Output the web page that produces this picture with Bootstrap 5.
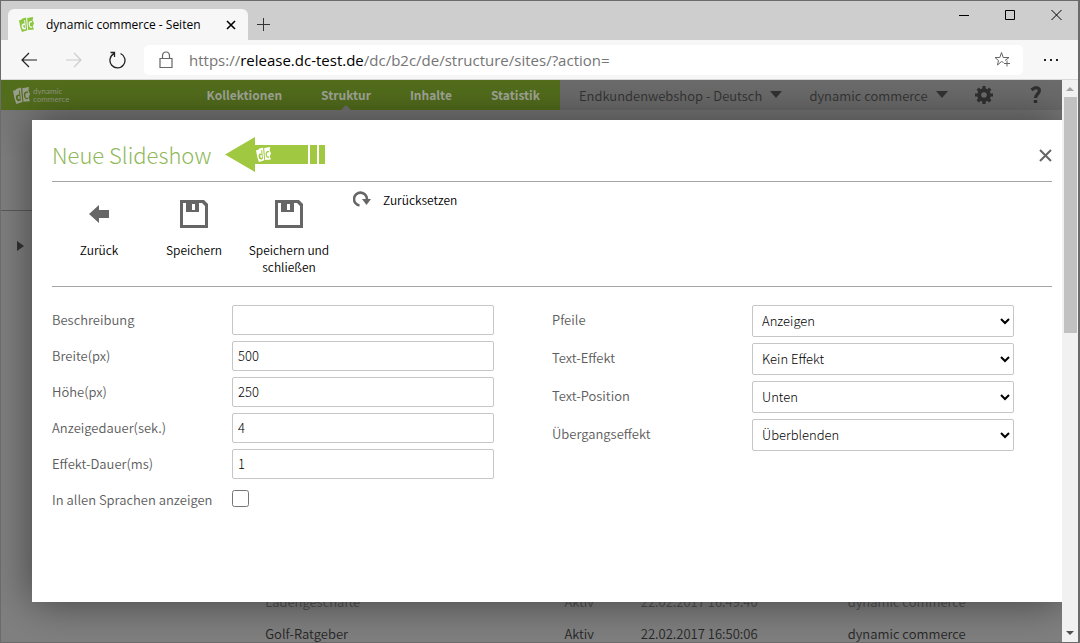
<!DOCTYPE html>
<html lang="de">
<head>
<meta charset="utf-8">
<meta name="viewport" content="width=device-width, initial-scale=1">
<title>dynamic commerce - Seiten</title>
<link href="https://cdn.jsdelivr.net/npm/bootstrap@5.3.0/dist/css/bootstrap.min.css" rel="stylesheet">
<style>
  body { font-family: "Noto Sans CJK SC", sans-serif; font-size: 13px; font-weight: 350; line-height: 17px; color: #5c5c5c; background: #6b6b6b; }
  svg { display: block; flex: none; }
  button { background: none; border: 0; padding: 0; color: inherit; font-weight: inherit; }
  .browser { border: 1px solid #6b6b6b; border-right-width: 2px; }
  .chrome-ui { font-family: "Open Sans", sans-serif; font-weight: 400; color: #000; }
  .tab-strip { background: #cecece; height: 39px; padding: 8px 0 0 7px; }
  .tab { background: #f7f7f7; width: 240px; height: 31px; border-radius: 6px 6px 0 0; padding: 0 12px 0 11px; font-size: 12px; }
  .window-controls { gap: 35px; margin: -2px 15px 0 0; }
  .address-row { background: #f7f7f7; height: 40px; border-bottom: 1px solid #d9d9d9; padding: 0 19px 0 20px; }
  .nav-icon { margin-left: 27px; }
  .address { background: #fff; height: 30px; border-radius: 5px; margin: 0 20px 0 18px; padding: 0 12px 0 15px; }
  .url { font-size: 15px; line-height: 20px; color: #757575; text-decoration: none; }
  .url b { font-weight: 400; color: #000; }
  .viewport { min-height: 0; }
  .site { background: linear-gradient(#727272, #808080 80px); }
  .site-header { height: 30px; background: #6c6c6c; }
  .green-bar { background: #536e1c; width: 559px; padding: 0 20px 0 12px; gap: 39px; font-size: 12px; }
  .green-bar a { color: #a3a89a; font-weight: 700; text-decoration: none; line-height: 30px; }
  .green-bar .active::after { content: ""; position: absolute; left: 50%; bottom: 0; margin-left: -5px; border: 5px solid transparent; border-top: 0; border-bottom-color: #737373; }
  .brand { gap: 3px; }
  .brand-text { font-family: Lato, sans-serif; font-weight: 400; font-size: 8px; line-height: 8px; color: #8f9880; }
  .grey-bar { color: #333; padding: 0 20px 0 19px; }
  .help { margin-left: 10px; }
  .side-line { margin-top: 100px; border-top: 1px solid #5b5b5b; }
  .side-arrow { margin: 29px 0 0 16px; }
  .page-rows td { padding: 8px 0 7px; color: #262626; border: 0; }
  .page-rows tr:first-child td { color: #505050; }
  .page-rows tr:last-child td { padding-bottom: 0; }
  .dialog-box { top: 40px; left: 31px; right: 0; background: #fff; box-shadow: 0 0 40px rgba(0,0,0,.5); padding: 0 10px 87px 20px; }
  .dialog-head { height: 62px; border-bottom: 1px solid #a5a5a5; padding-top: 9px; }
  .dialog-head h1 { font-size: 22px; line-height: 30px; font-weight: 200; color: #8fb85a; padding-bottom: 2px; }
  .marker { margin-left: 14px; }
  .tools { height: 105px; border-bottom: 1px solid #a5a5a5; color: #000; font-size: 12px; }
  .tool { width: 94px; padding-top: 15px; margin-right: 1px; }
  .tool svg { margin: 0 auto 12px; }
  .fields { padding-top: 18px; }
  .field-left { height: 30px; margin-bottom: 6px; }
  .field-right { height: 32px; margin-bottom: 6px; }
  .field-left label { width: 180px; padding-bottom: 2px; }
  .field-right label { width: 200px; padding-bottom: 3px; }
  .field-left input[type=text], .field-right select { border: 1px solid #c6c6c6; border-radius: 2px; background: #fff; color: #000; font-weight: 300; min-width: 0; height: 100%; padding: 0 5px 1px; }
  .field-left input[type=checkbox] { width: 17px; height: 17px; margin: 0 0 4px; }
  .col-a { padding-right: 58px; }
  .col-b { padding-right: 38px; }
  .scroll-track { width: 16px; background: #f1f1f1; }
  .scroll-thumb { width: 13px; height: 236px; background: #c1c1c1; }
</style>
<script src="https://cdn.jsdelivr.net/npm/bootstrap@5.3.0/dist/js/bootstrap.bundle.min.js"></script>
</head>
<body>
<svg width="0" height="0" class="position-absolute" aria-hidden="true">
  <symbol id="dc" viewBox="0 0 18 18">
    <path fill="currentColor" fill-rule="evenodd" d="M0 4 3 3.200 3.400 2 8.500 .5 9 7 10 16 3.500 18 1.500 12ZM6.200 4 6.700 8C3.500 7.500 2.500 10 3.500 13 4.500 15.500 6.500 15.500 8.300 14L7.300 3.700ZM5 10.500Q6 9 6.900 9.500L7.200 13Q5 13.500 5 10.500ZM9.800 1.200 17 0 16.300 4 18 7.500 16.500 11 18 15 11 15.700ZM15.800 5C12.500 4 11 6.500 11.700 9.500 12.300 13 14.500 13.500 16 12.500L15.700 11.300C14 12 13.200 11 13 9 12.700 6.500 14 5.800 15.600 6.500Z"/>
  </symbol>
  <symbol id="disk" viewBox="0 0 28 28">
    <path fill="#666" fill-rule="evenodd" d="M0 0H24L28 4V28H0ZM3 3V25H25V6L22 3H19V12H6V3ZM12 4V10H15V4Z"/>
  </symbol>
</svg>
<div class="browser d-flex flex-column vh-100 overflow-hidden">
  <div class="chrome-ui">
    <div class="tab-strip d-flex">
      <div class="tab d-flex align-items-center">
        <svg width="15" height="15" color="#8cc63f"><use href="#dc"/></svg>
        <span class="ms-2 ps-1 text-nowrap">dynamic commerce - Seiten</span>
        <button class="ms-auto" aria-label="Tab schließen"><svg width="10" height="10" stroke="#000" stroke-width="1.600"><path d="M1 1 9 9M9 1 1 9"/></svg></button>
      </div>
      <button class="ms-2" aria-label="Neuer Tab"><svg width="15" height="15" stroke="#333"><path d="M7.500 1V14M1 7.500H14"/></svg></button>
      <div class="window-controls d-flex ms-auto align-items-start">
        <button aria-label="Minimieren"><svg width="11" height="12" stroke="#000"><path d="M0 8.500H10"/></svg></button>
        <button aria-label="Maximieren"><svg width="11" height="14" stroke="#000" fill="none"><path d="M.5 3.500H9.500V12.500H.5Z"/></svg></button>
        <button aria-label="Schließen"><svg width="12" height="14" stroke="#000"><path d="M.5 3 10.500 13M10.500 3 .5 13"/></svg></button>
      </div>
    </div>
    <div class="address-row d-flex align-items-center">
      <button aria-label="Zurück"><svg width="17" height="16" fill="none" stroke="#222" stroke-width="1.200"><path d="M16 8H1M8 1 1 8 8 15"/></svg></button>
      <button class="nav-icon" aria-label="Vorwärts"><svg width="17" height="16" fill="none" stroke="#ccc" stroke-width="1.200"><path d="M1 8H16M9 1 16 8 9 15"/></svg></button>
      <button class="nav-icon" aria-label="Aktualisieren"><svg width="17" height="18" fill="none" stroke="#222" stroke-width="1.300"><path d="M11.500 2.500A7.500 7.500 0 1 1 5 2.700M1.500 1.500H5.500V6"/></svg></button>
      <div class="address d-flex align-items-center flex-grow-1">
        <svg width="14" height="18" fill="none" stroke="#666" stroke-width="1.200"><path d="M1 7.500H13V16.500H1ZM3.500 7V5Q3.500 1 7 1T10.500 5V7"/></svg>
        <a class="url ms-3" href="#">https://<b>release.dc-test.de</b>/dc/b2c/de/structure/sites/?action=</a>
        <button class="ms-auto" aria-label="Favorit"><svg width="17" height="17" fill="none" stroke="#666"><path d="M9.500 11.500 7.500 10.500 3.500 14 4.500 9.500 1 6.500H5.800L7.500 1.500 9.200 6.500H15L11 9.500M13 9.500V15.500M10 12.500H16"/></svg></button>
      </div>
      <button aria-label="Menü"><svg width="16" height="4"><path d="M1 1h2v2H1zM7 1h2v2H7zM13 1h2v2h-2z" fill="#222"/></svg></button>
    </div>
  </div>

  <div class="viewport d-flex flex-grow-1">
    <div class="site position-relative flex-grow-1 d-flex flex-column overflow-hidden">
      <header class="site-header d-flex">
        <nav class="green-bar d-flex align-items-center">
          <div class="brand d-flex align-items-center me-auto">
            <svg width="17" height="17" color="#9ba08e"><use href="#dc"/></svg>
            <div class="brand-text"><div>dynamic</div><div>commerce</div></div>
          </div>
          <a href="#">Kollektionen</a>
          <a href="#" class="active position-relative">Struktur</a>
          <a href="#">Inhalte</a>
          <a href="#">Statistik</a>
        </nav>
        <div class="grey-bar d-flex align-items-center flex-grow-1 justify-content-between">
          <button class="d-flex align-items-center gap-2">Endkundenwebshop - Deutsch <svg width="12" height="8" fill="#333"><path d="M0 0H12L6 7Z"/></svg></button>
          <button class="d-flex align-items-center gap-2">dynamic commerce <svg width="12" height="8" fill="#333"><path d="M0 0H12L6 7Z"/></svg></button>
          <button aria-label="Einstellungen"><svg width="18" height="18" viewBox="-9 -9 18 18"><circle r="4.800" fill="none" stroke="#303030" stroke-width="4"/><path stroke="#303030" stroke-width="3.200" d="M0-9V-5M0 9V5M-9 0H-5M9 0H5M-6.300-6.300-4-4M6.300 6.300 4 4M-6.300 6.300-4 4M6.300-6.300 4-4"/></svg></button>
          <button class="help" aria-label="Hilfe"><svg width="12" height="18" fill="none" stroke="#303030" stroke-width="3.200"><path d="M1.500 4Q6 0 9 3C11 7 5.500 8 5.500 12M3.800 15.500H7.200"/></svg></button>
        </div>
      </header>
      <div class="side-line"></div>
      <svg class="side-arrow" width="8" height="12" fill="#333"><path d="M0 1 7 6 0 11Z"/></svg>
      <table class="page-rows mt-auto">
        <colgroup><col style="width:24.900%"><col style="width:28.200%"><col style="width:7.200%"><col style="width:19.500%"><col></colgroup>
        <tbody>
          <tr><td></td><td>Ladengeschäfte</td><td>Aktiv</td><td>22.02.2017 16:49:40</td><td>dynamic commerce</td></tr>
          <tr><td></td><td>Golf-Ratgeber</td><td>Aktiv</td><td>22.02.2017 16:50:06</td><td>dynamic commerce</td></tr>
        </tbody>
      </table>

      <section class="dialog-box position-absolute" role="dialog" aria-labelledby="dlg-title">
        <div class="dialog-head d-flex align-items-center">
          <h1 id="dlg-title" class="m-0">Neue Slideshow</h1>
          <svg class="marker" width="101" height="36" color="#fff"><path fill="#a0c840" d="M0 17.500 30 0V8H83V27H30V35ZM85 8H92V27H85ZM94 8H100V27H94Z"/><use href="#dc" x="31" y="10" width="15" height="15"/></svg>
          <button class="ms-auto" aria-label="Schließen"><svg width="13" height="14" stroke="#666" stroke-width="2"><path d="M1 2 12 13M12 2 1 13"/></svg></button>
        </div>
        <div class="tools d-flex align-items-start">
          <button class="tool"><svg width="28" height="32"><path fill="#666" d="M4 17 14 8V13H24V21H14V26Z"/></svg>Zurück</button>
          <button class="tool"><svg width="28" height="32"><use href="#disk" y="3" width="28" height="28"/></svg>Speichern</button>
          <button class="tool"><svg width="28" height="32"><use href="#disk" y="3" width="28" height="28"/></svg>Speichern und schließen</button>
          <button class="d-flex align-items-center ms-3 mt-2"><svg width="18" height="18"><path fill="none" stroke="#666" stroke-width="2.600" d="M6.500 15.500A6.500 6.500 0 1 1 14 9"/><path fill="#666" d="M9 9H18L13.500 15Z"/></svg><span class="ms-2 ps-1">Zurücksetzen</span></button>
        </div>
        <form class="fields row g-0">
          <div class="col-6 col-a">
            <div class="field-left d-flex align-items-center"><label for="f1">Beschreibung</label><input id="f1" type="text" class="flex-grow-1"></div>
            <div class="field-left d-flex align-items-center"><label for="f2">Breite(px)</label><input id="f2" type="text" class="flex-grow-1" value="500"></div>
            <div class="field-left d-flex align-items-center"><label for="f3">Höhe(px)</label><input id="f3" type="text" class="flex-grow-1" value="250"></div>
            <div class="field-left d-flex align-items-center"><label for="f4">Anzeigedauer(sek.)</label><input id="f4" type="text" class="flex-grow-1" value="4"></div>
            <div class="field-left d-flex align-items-center"><label for="f5">Effekt-Dauer(ms)</label><input id="f5" type="text" class="flex-grow-1" value="1"></div>
            <div class="field-left d-flex align-items-center mb-0"><label for="f6">In allen Sprachen anzeigen</label><input id="f6" type="checkbox"></div>
          </div>
          <div class="col-6 col-b">
            <div class="field-right d-flex align-items-center"><label for="s1">Pfeile</label><select id="s1" class="flex-grow-1"><option>Anzeigen</option></select></div>
            <div class="field-right d-flex align-items-center"><label for="s2">Text-Effekt</label><select id="s2" class="flex-grow-1"><option>Kein Effekt</option></select></div>
            <div class="field-right d-flex align-items-center"><label for="s3">Text-Position</label><select id="s3" class="flex-grow-1"><option>Unten</option></select></div>
            <div class="field-right d-flex align-items-center"><label for="s4">Übergangseffekt</label><select id="s4" class="flex-grow-1"><option>Überblenden</option></select></div>
          </div>
        </form>
      </section>
    </div>
    <div class="scroll-track d-flex flex-column align-items-center">
      <svg width="8" height="17" fill="#a3a3a3"><path d="M0 11 4 7 8 11Z"/></svg>
      <div class="scroll-thumb"></div>
      <svg class="mt-auto" width="8" height="17" fill="#505050"><path d="M0 6H8L4 10Z"/></svg>
    </div>
  </div>
</div>
</body>
</html>
